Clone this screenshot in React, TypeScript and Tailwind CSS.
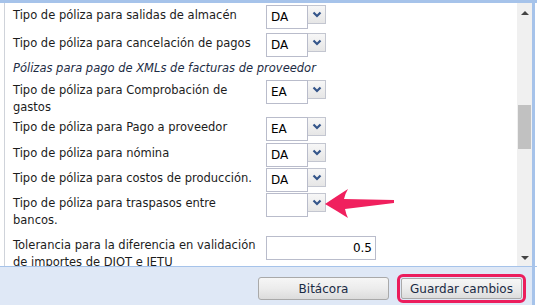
import React from 'react';

const font = { fontFamily: '"DejaVu Sans", Verdana, sans-serif' };

const Chevron: React.FC = () => (
    <svg width="10" height="7" viewBox="0 0 10 7">
        <path d="M1.5 1.5 L5 5 L8.5 1.5" fill="none" stroke="#34558a" strokeWidth="2.2" />
    </svg>
);

const Combo: React.FC<{ value: string }> = ({ value }) => (
    <div className="flex items-start">
        <div className="w-[42px] h-[24px] border border-[#b9bccb] bg-white flex items-center pl-[4px] text-[12px] text-black">
            {value}
        </div>
        <div className="w-[18px] h-[19px] border border-l-0 border-[#c3c6d0] bg-gradient-to-b from-[#f7f7f7] to-[#e6e6e6] flex items-center justify-center">
            <Chevron />
        </div>
    </div>
);

type Row = { label: string; value: string; h: string };

const rowsTop: Row[] = [
    { label: 'Tipo de póliza para salidas de almacén', value: 'DA', h: 'h-[28px]' },
    { label: 'Tipo de póliza para cancelación de pagos', value: 'DA', h: 'h-[27px]' },
];

const rowsBottom: Row[] = [
    { label: 'Tipo de póliza para Comprobación de gastos', value: 'EA', h: 'h-[37px]' },
    { label: 'Tipo de póliza para Pago a proveedor', value: 'EA', h: 'h-[26px]' },
    { label: 'Tipo de póliza para nómina', value: 'DA', h: 'h-[25px]' },
    { label: 'Tipo de póliza para costos de producción.', value: 'DA', h: 'h-[25px]' },
    { label: 'Tipo de póliza para traspasos entre bancos.', value: '', h: 'h-[43px]' },
];

const FormRow: React.FC<{ row: Row }> = ({ row }) => (
    <div className={`flex items-start ${row.h}`}>
        <div className="w-[253px] shrink-0 pt-[2px] pr-[2px] leading-[17px]">{row.label}</div>
        <Combo value={row.value} />
    </div>
);

const App: React.FC = () => {
    return (
        <div className="relative w-[537px] h-[305px] bg-white flex flex-col overflow-hidden text-[11.5px] text-[#1c1c1c]" style={font}>
            <div className="flex h-[267px] border-t-[3px] border-b border-[#a6c3ea]">
                <div className="w-[4px]" />
                <div className="w-px bg-[#cfd3da]" />

                {/* Form */}
                <div className="flex-1 overflow-hidden pl-[8px] pt-[2px]">
                    {rowsTop.map((r) => (
                        <FormRow key={r.label} row={r} />
                    ))}
                    <div className="h-[20px] leading-[17px] italic text-[#1d2c44]">
                        Pólizas para pago de XMLs de facturas de proveedor
                    </div>
                    {rowsBottom.map((r) => (
                        <FormRow key={r.label} row={r} />
                    ))}
                    <div className="flex items-start">
                        <div className="w-[253px] shrink-0 pt-[1px] pr-[2px] leading-[17px]">
                            Tolerancia para la diferencia en validación de importes de DIOT e IETU
                        </div>
                        <div className="w-[110px] h-[24px] border border-[#b9bccb] flex items-center justify-end pr-[3px] text-[12px] text-black">
                            0.5
                        </div>
                    </div>
                </div>

                {/* Scrollbar */}
                <div className="relative w-[15px] bg-[#f0f0f0] flex flex-col items-center justify-between pt-[8px] pb-[6px]">
                    <div className="w-0 h-0 border-l-[4px] border-r-[4px] border-b-[4px] border-l-transparent border-r-transparent border-b-[#444]" />
                    <div className="absolute left-[1px] top-[102px] w-[13px] h-[44px] bg-[#c1c1c1]" />
                    <div className="w-0 h-0 border-l-[4px] border-r-[4px] border-t-[4px] border-l-transparent border-r-transparent border-t-[#444]" />
                </div>
                <div className="w-[3px] bg-[#a6c3ea]" />
                <div className="w-[2px] bg-white" />
            </div>

            {/* Footer */}
            <div className="flex-1 flex">
                <div className="flex-1 bg-[#dfe8f6] flex items-start justify-end gap-[8px] pt-[9px] pr-[6px]">
                    <button className="mt-[1px] w-[131px] h-[23px] rounded-[3px] border border-[#a9a9a9] bg-gradient-to-b from-[#f6f6f6] via-[#ececec] to-[#dcdcdc] text-[12px] text-[#1a2a44]">
                        Bitácora
                    </button>
                    <div className="rounded-[6px] border-[3px] border-[#eb1d5d] p-[1px] -mt-[2px]">
                        <button className="w-[121px] h-[21px] rounded-[2px] border border-[#a9a9a9] bg-gradient-to-b from-[#f6f6f6] via-[#ececec] to-[#dcdcdc] text-[12px] text-[#1a2a44]">
                            Guardar cambios
                        </button>
                    </div>
                </div>
                <div className="w-[3px] bg-[#a6c3ea]" />
                <div className="w-[2px] bg-white" />
            </div>

            {/* Pointer arrow */}
            <svg className="absolute left-[320px] top-[184px]" width="80" height="40" viewBox="0 0 80 40">
                <path d="M5 20 Q17 12 28 5 Q25 10 24 15 L74 16 L74 19 L25 25 Q26 30 28 34 Q17 27 5 20 Z" fill="#f0205e" />
            </svg>
        </div>
    );
};

export default App;
